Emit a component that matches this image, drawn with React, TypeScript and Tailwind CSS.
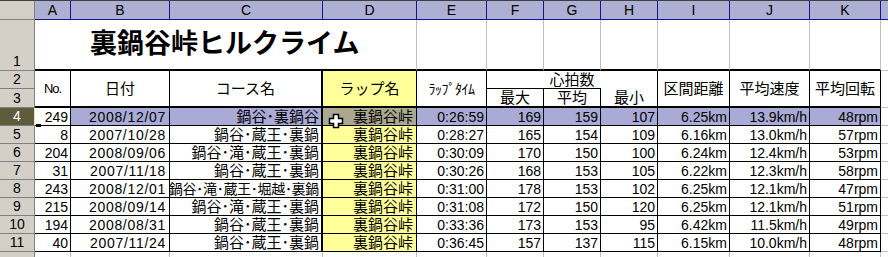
const COLW = [
  'w-[36px]',
  'w-[99px]',
  'w-[153px]',
  'w-[94px]',
  'w-[70px]',
  'w-[57px]',
  'w-[57px]',
  'w-[57px]',
  'w-[72px]',
  'w-[80px]',
  'w-[71px]',
];

const LETTERS = ['A', 'B', 'C', 'D', 'E', 'F', 'G', 'H', 'I', 'J', 'K'];

type Row = {
  r: number;
  no: string;
  date: string;
  course: string;
  time: string;
  max: string;
  avg: string;
  min: string;
  dist: string;
  speed: string;
  cad: string;
  small?: boolean;
};

const rows: Row[] = [
  { r: 4, no: '249', date: '2008/12/07', course: '鍋谷･裏鍋谷', time: '0:26:59', max: '169', avg: '159', min: '107', dist: '6.25km', speed: '13.9km/h', cad: '48rpm' },
  { r: 5, no: '8', date: '2007/10/28', course: '鍋谷･蔵王･裏鍋', time: '0:28:27', max: '165', avg: '154', min: '109', dist: '6.16km', speed: '13.0km/h', cad: '57rpm' },
  { r: 6, no: '204', date: '2008/09/06', course: '鍋谷･滝･蔵王･裏鍋', time: '0:30:09', max: '170', avg: '150', min: '100', dist: '6.24km', speed: '12.4km/h', cad: '53rpm' },
  { r: 7, no: '31', date: '2007/11/18', course: '鍋谷･蔵王･裏鍋', time: '0:30:26', max: '168', avg: '153', min: '105', dist: '6.22km', speed: '12.3km/h', cad: '58rpm' },
  { r: 8, no: '243', date: '2008/12/01', course: '鍋谷･滝･蔵王･堀越･裏鍋', time: '0:31:00', max: '178', avg: '153', min: '102', dist: '6.25km', speed: '12.1km/h', cad: '47rpm', small: true },
  { r: 9, no: '215', date: '2008/09/14', course: '鍋谷･滝･蔵王･裏鍋', time: '0:31:08', max: '172', avg: '150', min: '120', dist: '6.25km', speed: '12.1km/h', cad: '51rpm' },
  { r: 10, no: '194', date: '2008/08/31', course: '鍋谷･蔵王･裏鍋', time: '0:33:36', max: '173', avg: '153', min: '95', dist: '6.42km', speed: '11.5km/h', cad: '49rpm' },
  { r: 11, no: '40', date: '2007/11/24', course: '鍋谷･蔵王･裏鍋', time: '0:36:45', max: '157', avg: '137', min: '115', dist: '6.15km', speed: '10.0km/h', cad: '48rpm' },
];

function RowHead({ n, h, active }: { n: string; h: string; active?: boolean }) {
  return (
    <div
      className={`w-[35px] ${h} shrink-0 flex items-center justify-center border-r border-b border-[#808080] text-[14px] ${
        active ? 'bg-[#5e5c3d] text-white border-r-[#e8e6a0]' : 'bg-[#d4d0c8]'
      }`}
    >
      {n}
    </div>
  );
}

function DataRow({ row }: { row: Row }) {
  const sel = row.r === 4;
  const bg = sel ? 'bg-[#a9aad6]' : 'bg-white';
  const cell =
    'h-full shrink-0 flex items-center justify-end border-r border-b border-black pr-[2px] text-[14px] leading-none whitespace-nowrap overflow-hidden';
  const vals = [row.time, row.max, row.avg, row.min, row.dist, row.speed, row.cad];
  return (
    <div className="flex h-[18px]">
      <RowHead n={String(row.r)} h="h-[18px]" active={sel} />
      <div className={`${COLW[0]} ${cell} bg-white`}>{row.no}</div>
      <div className={`${COLW[1]} ${cell} ${bg} pr-[3px] tracking-[0.7px]`}>{row.date}</div>
      <div
        className={`${COLW[2]} ${cell} ${bg} border-r-2 ${
          row.small ? 'text-[12.5px] tracking-[-0.3px]' : 'text-[15px]'
        }`}
      >
        {row.course}
      </div>
      <div className={`${COLW[3]} ${cell} ${sel ? 'bg-[#aaa88e]' : 'bg-[#ffff99]'} pr-[3px] text-[15px]`}>裏鍋谷峠</div>
      {vals.map((v, i) => (
        <div key={i} className={`${COLW[i + 4]} ${cell} ${bg}`}>
          {v}
        </div>
      ))}
      <div className="flex-1 h-full border-b border-[#c0c0c0]" />
    </div>
  );
}

export default function App() {
  return (
    <div className="relative w-[888px] h-[257px] overflow-hidden bg-white text-black font-['Liberation_Sans','Noto_Sans_CJK_JP',sans-serif]">
      {/* column letters */}
      <div className="flex h-[20px] border-t border-[#404040]">
        <div className="w-[35px] shrink-0 h-full bg-[#d4d0c8] border-r border-b border-[#808080]" />
        {LETTERS.map((l, i) => (
          <div
            key={l}
            className={`${COLW[i]} shrink-0 h-full flex items-center justify-center bg-[#adafd3] border-r border-b border-[#14148c] text-[14px] leading-none`}
          >
            {l}
          </div>
        ))}
        <div className="flex-1 h-full bg-[#adafd3] border-b border-[#14148c]" />
      </div>

      {/* row 1: title */}
      <div className="flex h-[51px]">
        <div className="w-[35px] shrink-0 h-full bg-[#d4d0c8] border-r border-b border-[#808080] flex items-end justify-center pb-[2px] text-[14px] leading-none">
          1
        </div>
        <div className="w-[382px] shrink-0 h-full flex items-center pl-[55px] border-r border-r-[#c0c0c0] border-b-2 border-b-black text-[27px] font-bold leading-none whitespace-nowrap">
          裏鍋谷峠ヒルクライム
        </div>
        {COLW.slice(4).map((w, i) => (
          <div key={i} className={`${w} shrink-0 h-full border-r border-r-[#c0c0c0] border-b-2 border-b-black`} />
        ))}
        <div className="flex-1 h-full border-b border-[#c0c0c0]" />
      </div>

      {/* rows 2-3: headings */}
      <div className="flex h-[37px]">
        <div className="w-[35px] shrink-0 flex flex-col">
          <RowHead n="2" h="h-[18px]" />
          <RowHead n="3" h="h-[19px]" />
        </div>
        <div className="flex-1 grid grid-cols-[36px_99px_153px_94px_70px_57px_57px_57px_72px_80px_71px_1fr] grid-rows-[17px_20px] text-[15px] leading-none">
          <div className="row-span-2 flex items-center justify-center border-r border-b-2 border-black text-[13px] tracking-[-1px]">No.</div>
          <div className="row-span-2 flex items-center justify-center border-r border-b-2 border-black">日付</div>
          <div className="row-span-2 flex items-center justify-center border-r-2 border-b-2 border-black">コース名</div>
          <div className="row-span-2 flex items-center justify-center border-r border-b-2 border-black bg-[#ffff99]">ラップ名</div>
          <div className="row-span-2 flex items-center justify-center border-r border-b-2 border-black text-[14px] tracking-[-0.5px]">ﾗｯﾌﾟﾀｲﾑ</div>
          <div className="col-span-3 flex items-end justify-center border-r border-black pb-[1px]">心拍数</div>
          <div className="row-span-2 flex items-center justify-center border-r border-b-2 border-black">区間距離</div>
          <div className="row-span-2 flex items-center justify-center border-r border-b-2 border-black">平均速度</div>
          <div className="row-span-2 flex items-center justify-center border-r border-b-2 border-black">平均回転</div>
          <div className="row-span-2 border-b border-[#c0c0c0]" />
          <div className="flex items-center justify-center border-t border-r border-b-2 border-black">最大</div>
          <div className="flex items-center justify-center border-t border-r border-b-2 border-black">平均</div>
          <div className="flex items-center justify-center border-r border-b-2 border-black pt-[1px]">最小</div>
        </div>
      </div>

      {/* data rows */}
      {rows.map((r) => (
        <DataRow key={r.r} row={r} />
      ))}

      {/* row 12 (cut off) */}
      <div className="flex h-[6px]">
        <div className="w-[35px] shrink-0 h-full bg-[#d4d0c8] border-r border-[#808080]" />
        {COLW.map((w, i) => (
          <div key={i} className={`${w} shrink-0 h-full border-r border-[#c0c0c0]`} />
        ))}
      </div>

      {/* fill handle mark */}
      <div className="absolute left-[36px] top-[124px] w-[5px] h-[3px] bg-black" />

      {/* cell cursor */}
      <svg className="absolute left-[328px] top-[113px]" width="16" height="16" viewBox="0 0 16 16">
        <polygon
          points="5.5,1.5 10.5,1.5 10.5,5.5 14.5,5.5 14.5,10.5 10.5,10.5 10.5,14.5 5.5,14.5 5.5,10.5 1.5,10.5 1.5,5.5 5.5,5.5"
          fill="white"
          stroke="black"
          strokeWidth="1.5"
        />
      </svg>
    </div>
  );
}
